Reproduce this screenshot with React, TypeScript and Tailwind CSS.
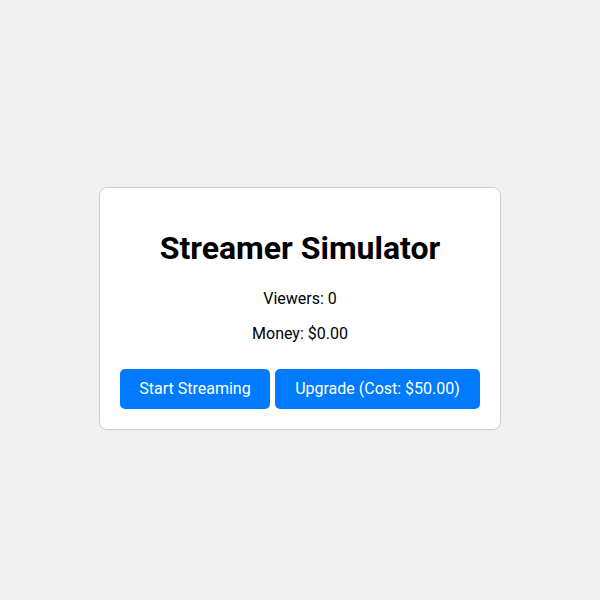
export default function App() {
  return (
    <div className="min-h-screen bg-[#f0f0f0] flex flex-col items-center pt-[187px] font-['Roboto',sans-serif]">
      <div className="w-[402px] bg-white border border-[#cccccc] rounded-lg px-5 pt-[41px] pb-5 text-center text-black">
        <h1 className="text-[32px] font-bold leading-[38px]">Streamer Simulator</h1>
        <p className="mt-[22px] text-base leading-[19px]">Viewers: 0</p>
        <p className="mt-4 text-base leading-[19px]">Money: $0.00</p>
        <div className="mt-[26px] flex gap-[5px]">
          <button className="w-[150px] h-10 bg-[#007bff] text-white text-base rounded-[5px]">
            Start Streaming
          </button>
          <button className="w-[205px] h-10 bg-[#007bff] text-white text-base rounded-[5px]">
            Upgrade (Cost: $50.00)
          </button>
        </div>
      </div>
    </div>
  );
}
